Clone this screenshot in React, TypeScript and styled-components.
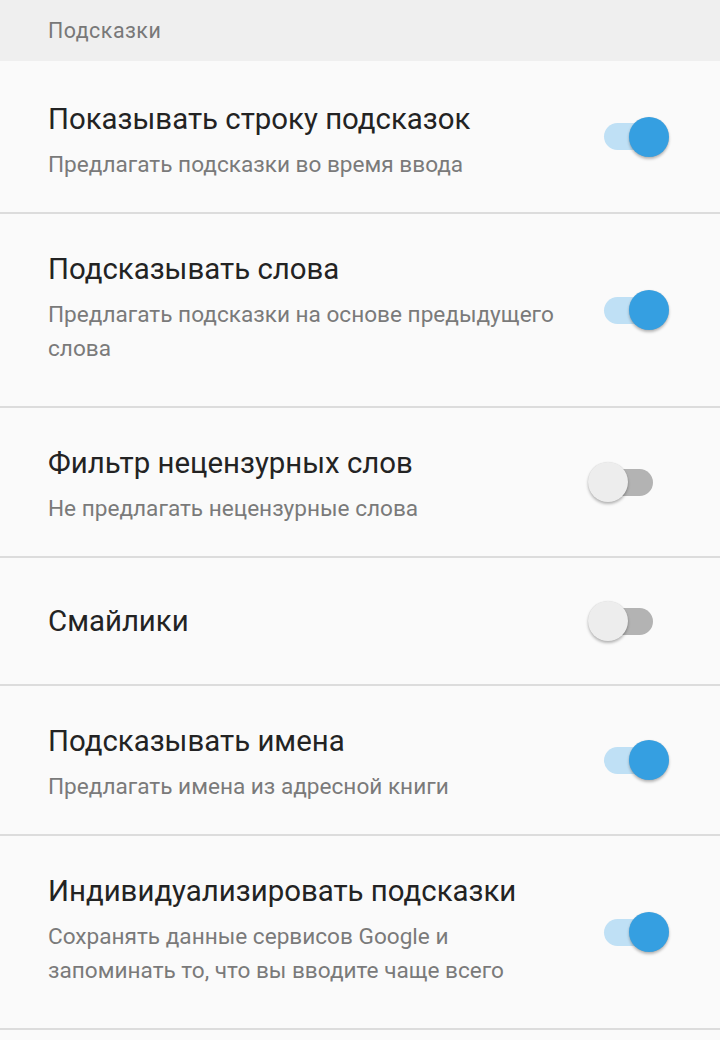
import React from "react";
import styled, { createGlobalStyle } from "styled-components";

const GlobalStyle = createGlobalStyle`
  html, body {
    margin: 0;
    padding: 0;
    background: #fafafa;
    font-family: Roboto, "Noto Sans", "Liberation Sans", sans-serif;
    -webkit-font-smoothing: antialiased;
  }
`;

const Page = styled.div`
  width: 720px;
  min-height: 1040px;
  background: #fafafa;
`;

const SectionHeader = styled.div`
  height: 61px;
  box-sizing: border-box;
  padding: 1px 48px 0;
  background: #efefef;
  color: #787878;
  font-size: 21.4px;
  letter-spacing: 0.5px;
  line-height: 60px;
`;

const Row = styled.div`
  display: flex;
  align-items: center;
  padding: 0 51px 0 48px;
  border-bottom: 2px solid #dcdcdc;
  &:first-of-type > div:first-child {
    padding-top: 40px;
  }
`;

const TextBlock = styled.div<{ $lines: number }>`
  flex: 1;
  min-width: 0;
  padding-right: 24px;
  padding-top: ${(p) => (p.$lines === 0 ? 45 : 37)}px;
  padding-bottom: ${(p) => (p.$lines === 0 ? 45 : p.$lines === 1 ? 30 : 40)}px;
`;

const Title = styled.div`
  font-size: 29.4px;
  line-height: 36px;
  color: #232323;
`;

const Summary = styled.div`
  margin-top: 11px;
  font-size: 22.6px;
  line-height: 34px;
  color: #7a7a7a;
`;

const SwitchBox = styled.div`
  position: relative;
  flex: none;
  width: 81px;
  height: 40px;
`;

const Track = styled.div<{ $on: boolean }>`
  position: absolute;
  left: 16px;
  top: 6.5px;
  width: 49px;
  height: 27px;
  border-radius: 13.5px;
  background: ${(p) => (p.$on ? "#bfe0f5" : "#b3b3b3")};
`;

const Thumb = styled.div<{ $on: boolean }>`
  position: absolute;
  top: 0;
  left: ${(p) => (p.$on ? 41 : 0)}px;
  width: 40px;
  height: 40px;
  border-radius: 50%;
  background: ${(p) => (p.$on ? "#359fe1" : "#ededed")};
  box-shadow: 0 2px 3px rgba(0, 0, 0, 0.28), 0 0 1px rgba(0, 0, 0, 0.12);
`;

type Item = { title: string; summary?: string; lines: number; on: boolean };

const items: Item[] = [
  {
    title: "Показывать строку подсказок",
    summary: "Предлагать подсказки во время ввода",
    lines: 1,
    on: true,
  },
  {
    title: "Подсказывать слова",
    summary: "Предлагать подсказки на основе предыдущего слова",
    lines: 2,
    on: true,
  },
  {
    title: "Фильтр нецензурных слов",
    summary: "Не предлагать нецензурные слова",
    lines: 1,
    on: false,
  },
  { title: "Смайлики", lines: 0, on: false },
  {
    title: "Подсказывать имена",
    summary: "Предлагать имена из адресной книги",
    lines: 1,
    on: true,
  },
  {
    title: "Индивидуализировать подсказки",
    summary: "Сохранять данные сервисов Google и запоминать то, что вы вводите чаще всего",
    lines: 2,
    on: true,
  },
];

const Switch = ({ on }: { on: boolean }) => (
  <SwitchBox>
    <Track $on={on} />
    <Thumb $on={on} />
  </SwitchBox>
);

export default function App() {
  return (
    <>
      <GlobalStyle />
      <Page>
        <SectionHeader>Подсказки</SectionHeader>
        <div>
          {items.map((it) => (
            <Row key={it.title}>
              <TextBlock $lines={it.lines}>
                <Title>{it.title}</Title>
                {it.summary && <Summary>{it.summary}</Summary>}
              </TextBlock>
              <Switch on={it.on} />
            </Row>
          ))}
        </div>
      </Page>
    </>
  );
}
